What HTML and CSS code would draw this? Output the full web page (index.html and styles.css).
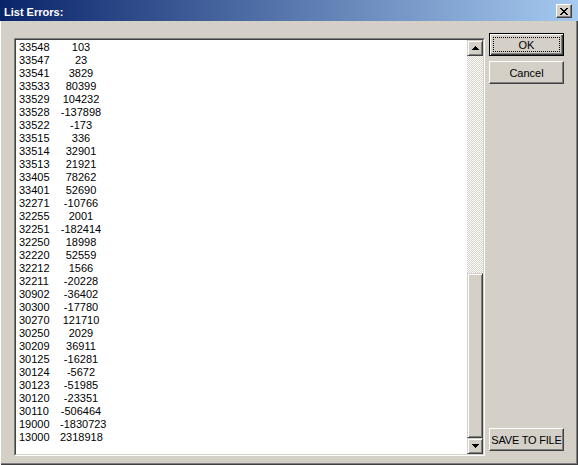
FILE: index.html
```html
<!DOCTYPE html>
<html>
<head>
<meta charset="utf-8">
<link rel="stylesheet" href="styles.css">
</head>
<body>
<div class="window">
  <div class="titlebar">
    <span class="title">List Errors:</span>
    <span class="close">
      <svg width="8" height="7" viewBox="0 0 8 7" shape-rendering="crispEdges"><path d="M0 0h2v1H0zM6 0h2v1H6zM1 1h2v1H1zM5 1h2v1H5zM2 2h4v1H2zM3 3h2v1H3zM2 4h4v1H2zM1 5h2v1H1zM5 5h2v1H5zM0 6h2v1H0zM6 6h2v1H6z" fill="#000"/></svg>
    </span>
  </div>
  <div class="content">
    <div class="listbox">
      <div class="listbox-inner">
        <div class="items">
          <div class="row"><span>33548</span><span>103</span></div>
          <div class="row"><span>33547</span><span>23</span></div>
          <div class="row"><span>33541</span><span>3829</span></div>
          <div class="row"><span>33533</span><span>80399</span></div>
          <div class="row"><span>33529</span><span>104232</span></div>
          <div class="row"><span>33528</span><span>-137898</span></div>
          <div class="row"><span>33522</span><span>-173</span></div>
          <div class="row"><span>33515</span><span>336</span></div>
          <div class="row"><span>33514</span><span>32901</span></div>
          <div class="row"><span>33513</span><span>21921</span></div>
          <div class="row"><span>33405</span><span>78262</span></div>
          <div class="row"><span>33401</span><span>52690</span></div>
          <div class="row"><span>32271</span><span>-10766</span></div>
          <div class="row"><span>32255</span><span>2001</span></div>
          <div class="row"><span>32251</span><span>-182414</span></div>
          <div class="row"><span>32250</span><span>18998</span></div>
          <div class="row"><span>32220</span><span>52559</span></div>
          <div class="row"><span>32212</span><span>1566</span></div>
          <div class="row"><span>32211</span><span>-20228</span></div>
          <div class="row"><span>30902</span><span>-36402</span></div>
          <div class="row"><span>30300</span><span>-17780</span></div>
          <div class="row"><span>30270</span><span>121710</span></div>
          <div class="row"><span>30250</span><span>2029</span></div>
          <div class="row"><span>30209</span><span>36911</span></div>
          <div class="row"><span>30125</span><span>-16281</span></div>
          <div class="row"><span>30124</span><span>-5672</span></div>
          <div class="row"><span>30123</span><span>-51985</span></div>
          <div class="row"><span>30120</span><span>-23351</span></div>
          <div class="row"><span>30110</span><span>-506464</span></div>
          <div class="row"><span>19000</span><span>-1830723</span></div>
          <div class="row"><span>13000</span><span>2318918</span></div>
        </div>
        <div class="scrollbar">
          <div class="sb-btn">
            <svg width="7" height="4" viewBox="0 0 7 4" shape-rendering="crispEdges"><path d="M3 0h1v1H3zM2 1h3v1H2zM1 2h5v1H1zM0 3h7v1H0z" fill="#000"/></svg>
          </div>
          <div class="track">
            <div class="thumb"></div>
          </div>
          <div class="sb-btn">
            <svg width="7" height="4" viewBox="0 0 7 4" shape-rendering="crispEdges"><path d="M0 0h7v1H0zM1 1h5v1H1zM2 2h3v1H2zM3 3h1v1H3z" fill="#000"/></svg>
          </div>
        </div>
      </div>
    </div>
    <div class="buttons">
      <div class="btn default"><span class="focus">OK</span></div>
      <div class="btn">Cancel</div>
      <div class="btn save">SAVE TO FILE</div>
    </div>
  </div>
</div>
</body>
</html>
```
FILE: styles.css
```css
html, body {
  margin: 0;
  padding: 0;
  background: #d4d0c8;
}
.window {
  width: 578px;
  height: 465px;
  display: flex;
  flex-direction: column;
  background: #d4d0c8;
  font-family: "Liberation Sans", Arial, sans-serif;
  font-size: 11px;
  color: #000;
  overflow: hidden;
}
.titlebar {
  height: 21px;
  flex: none;
  display: flex;
  align-items: flex-start;
  justify-content: space-between;
  padding: 0 6px 0 4px;
  box-sizing: border-box;
  background: linear-gradient(to right, #0a246a, #a6caf0);
}
.title {
  color: #fff;
  font-weight: bold;
  font-size: 11px;
  line-height: 13px;
  padding-top: 6px;
}
.close {
  margin-top: 4px;
  width: 16px;
  height: 14px;
  box-sizing: border-box;
  display: flex;
  align-items: center;
  justify-content: center;
  background: #d4d0c8;
  border: 1px solid;
  border-color: #fff #404040 #404040 #fff;
  box-shadow: inset -1px -1px 0 #808080;
}
.close svg { display: block; margin-left: -1px; }
.content {
  flex: 1;
  display: flex;
  align-items: flex-start;
  gap: 4px;
  padding: 12px 0 0 14px;
  box-shadow: inset 1px 0 0 #fff, inset -1px -1px 0 #404040, inset -2px -2px 0 #808080;
}
.listbox {
  margin-top: 5px;
  width: 471px;
  height: 418px;
  box-sizing: border-box;
  border: 1px solid;
  border-color: #808080 #fff #fff #808080;
  display: flex;
}
.listbox-inner {
  flex: 1;
  display: flex;
  border: 1px solid;
  border-color: #404040 #d4d0c8 #d4d0c8 #404040;
  background: #fff;
}
.items {
  flex: 1;
  padding: 1px 0 0 3px;
}
.row {
  display: grid;
  grid-template-columns: 41px 42px;
  height: 13px;
  line-height: 13px;
  white-space: nowrap;
}
.row span:nth-child(2) {
  text-align: center;
}
.scrollbar {
  width: 16px;
  display: flex;
  flex-direction: column;
  background: repeating-conic-gradient(#fff 0 25%, #d4d0c8 0 50%) 0 0 / 2px 2px;
}
.sb-btn {
  height: 16px;
  flex: none;
  box-sizing: border-box;
  display: flex;
  align-items: center;
  justify-content: center;
  background: #d4d0c8;
  border: 1px solid;
  border-color: #d4d0c8 #404040 #404040 #d4d0c8;
  box-shadow: inset 1px 1px 0 #fff, inset -1px -1px 0 #808080;
}
.sb-btn svg { display: block; }
.track {
  flex: 1;
  display: flex;
  flex-direction: column;
  justify-content: flex-end;
}
.thumb {
  height: 165px;
  box-sizing: border-box;
  background: #d4d0c8;
  border: 1px solid;
  border-color: #d4d0c8 #404040 #404040 #d4d0c8;
  box-shadow: inset 1px 1px 0 #fff, inset -1px -1px 0 #808080;
}
.buttons {
  width: 75px;
  height: 418px;
  display: flex;
  flex-direction: column;
  gap: 5px;
}
.btn {
  height: 23px;
  box-sizing: border-box;
  display: flex;
  align-items: center;
  justify-content: center;
  white-space: nowrap;
  background: #d4d0c8;
  border: 1px solid;
  border-color: #fff #404040 #404040 #fff;
  box-shadow: inset -1px -1px 0 #808080;
}
.btn.default {
  border-color: #000;
  box-shadow: inset 1px 1px 0 #fff, inset -1px -1px 0 #404040, inset -2px -2px 0 #808080;
  padding: 3px;
}
.focus {
  flex: 1;
  align-self: stretch;
  display: flex;
  align-items: center;
  justify-content: center;
  border: 1px dotted #000;
}
.save {
  margin-top: auto;
  letter-spacing: -0.2px;
}
```
